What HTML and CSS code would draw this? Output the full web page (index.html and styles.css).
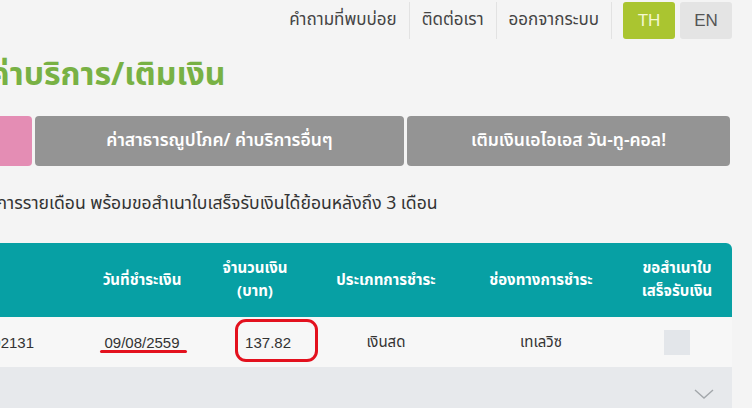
FILE: index.html
```html
<!DOCTYPE html>
<html>
<head>
<meta charset="utf-8">
<title>ชำระค่าบริการ/เติมเงิน</title>
<link rel="stylesheet" href="styles.css">
</head>
<body>
  <header class="topbar">
    <nav class="toplinks">
      <a class="toplink" href="#">คำถามที่พบบ่อย</a>
      <a class="toplink" href="#">ติดต่อเรา</a>
      <a class="toplink" href="#">ออกจากระบบ</a>
    </nav>
    <div class="langs">
      <span class="lang lang-active">TH</span>
      <span class="lang">EN</span>
    </div>
  </header>

  <main class="page">
    <h1 class="title">ชำระค่าบริการ/เติมเงิน</h1>

    <div class="tabs">
      <a class="tab tab-pay" href="#">ชำระค่าบริการรายเดือน</a>
      <a class="tab tab-util" href="#">ค่าสาธารณูปโภค/ ค่าบริการอื่นๆ</a>
      <a class="tab tab-topup" href="#">เติมเงินเอไอเอส วัน-ทู-คอล!</a>
    </div>

    <p class="intro">ชำระค่าบริการรายเดือน พร้อมขอสำเนาใบเสร็จรับเงินได้ย้อนหลังถึง 3 เดือน</p>

    <div class="history">
      <div class="row head">
        <div class="cell">หมายเลขโทรศัพท์</div>
        <div class="cell">เลขที่<br>ใบเสร็จ</div>
        <div class="cell">วันที่ชำระเงิน</div>
        <div class="cell">จำนวนเงิน<br>(บาท)</div>
        <div class="cell">ประเภทการชำระ</div>
        <div class="cell">ช่องทางการชำระ</div>
        <div class="cell">ขอสำเนาใบ<br>เสร็จรับเงิน</div>
      </div>
      <div class="row item">
        <div class="cell num">0812345678</div>
        <div class="cell num">110016090802131</div>
        <div class="cell num"><span class="mark-line">09/08/2559</span></div>
        <div class="cell num amount"><span class="mark-box">137.82</span></div>
        <div class="cell">เงินสด</div>
        <div class="cell">เทเลวิซ</div>
        <div class="cell"><span class="check"></span></div>
      </div>
      <div class="more">
        <svg class="chevron" width="20" height="10" viewBox="0 0 20 10"><path d="M1 1 L10 9 L19 1" fill="none" stroke="#a3a7ab" stroke-width="1.4"/></svg>
      </div>
    </div>
  </main>
</body>
</html>
```

FILE: styles.css
```css
html {
  overflow: hidden;
}
body {
  margin: 0;
  background: #f4f4f4;
  color: #333;
  font-family: "Noto Sans Thai", "Liberation Sans", "Noto Sans", sans-serif;
  overflow: hidden;
  height: 408px;
}
a {
  text-decoration: none;
  color: inherit;
}

/* top bar */
.topbar {
  display: flex;
  justify-content: flex-end;
  align-items: center;
  padding: 2px 20px 0 0;
  height: 37px;
}
.toplinks {
  display: flex;
  height: 37px;
  align-items: center;
}
.toplink {
  font-size: 17px;
  color: #444;
  padding: 0 12px;
  border-right: 1px solid #e2e2e2;
  line-height: 37px;
}
.langs {
  display: flex;
  gap: 5px;
  margin-left: 11px;
}
.lang {
  width: 52px;
  height: 37px;
  line-height: 37px;
  text-align: center;
  border-radius: 3px;
  background: #e4e4e4;
  color: #555;
  font-family: "Liberation Sans", sans-serif;
  font-size: 17px;
}
.lang-active {
  background: #aac530;
  color: #f4f8d0;
}

/* page */
.page {
  width: 804px;
  margin-left: -72px;
}
.title {
  margin: 14px 0 0 0;
  font-size: 32px;
  font-weight: 700;
  color: #78b144;
  line-height: 44px;
}
.tabs {
  display: flex;
  gap: 3px;
  margin: 19px 0 0 -230px;
}
.tab {
  height: 50px;
  line-height: 50px;
  border-radius: 4px;
  text-align: center;
  color: #fff;
  font-weight: 600;
  font-size: 17.5px;
  background: #949494;
}
.tab-pay {
  width: 334px;
  background: #e48db4;
}
.tab-util {
  width: 369px;
}
.tab-topup {
  width: 323px;
}
.intro {
  margin: 24px 0 0 0;
  font-size: 17.6px;
  color: #333;
}

/* history table */
.history {
  width: 1034px;
  margin: 26px 0 0 -230px;
}
.row {
  display: grid;
  grid-template-columns: 160px 228px 112px 114px 148px 162px 110px;
  align-items: center;
}
.head {
  height: 74px;
  background: #07a0a4;
  border-top-right-radius: 6px;
  color: #fff;
  font-weight: 700;
  font-size: 15px;
  line-height: 23px;
}
.cell {
  text-align: center;
}
.item {
  height: 50px;
  background: #f7f7f7;
  font-size: 15px;
}
.num {
  font-family: "Liberation Sans", sans-serif;
}
.amount {
  text-align: right;
  padding-right: 21px;
}

/* red marks drawn over the row */
.mark-line,
.mark-box {
  position: relative;
  display: inline-block;
  line-height: 1;
}
.mark-line::after {
  content: "";
  position: absolute;
  left: -4px;
  right: -7px;
  bottom: -3px;
  height: 3px;
  border-radius: 2px;
  background: #e3111e;
}
.mark-box::after {
  content: "";
  position: absolute;
  top: -16px;
  bottom: -12px;
  left: -10px;
  right: -27px;
  border: 3px solid #e3111e;
  border-radius: 11px;
}
.check {
  display: inline-block;
  width: 26px;
  height: 25px;
  background: #e3e6ea;
  vertical-align: middle;
}
.more {
  height: 60px;
  background: #e7e9ec;
  display: flex;
  justify-content: flex-end;
  padding: 22px 18px 0 0;
  box-sizing: border-box;
}
```
